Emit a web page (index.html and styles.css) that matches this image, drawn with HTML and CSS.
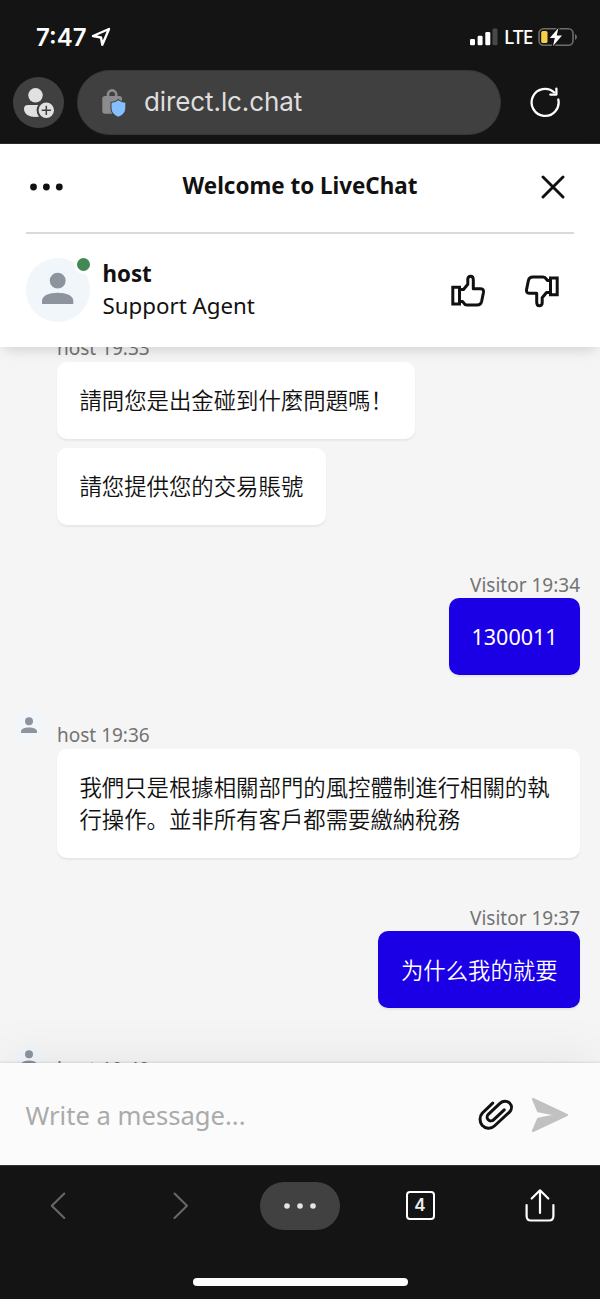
FILE: index.html
```html
<!DOCTYPE html>
<html lang="zh-Hans">
<head>
<meta charset="utf-8">
<title>Welcome to LiveChat</title>
<link rel="stylesheet" href="styles.css">
</head>
<body>
<div class="phone">
  <header class="browser-top">
    <div class="status">
      <div class="status-left">
        <span class="time">7:47</span>
        <svg class="location" width="20" height="20" viewBox="0 0 20 20"><path d="M2 9 L18 2 L11.3 17.8 L10 10.5 Z" fill="none" stroke="#fff" stroke-width="2.4" stroke-linejoin="round"/></svg>
      </div>
      <div class="status-right">
        <svg width="28" height="18" viewBox="0 0 28 18"><g fill="#fff"><rect x="0" y="11" width="5" height="6.3" rx="1.3"/><rect x="7.6" y="7.8" width="5" height="9.5" rx="1.3"/><rect x="15.3" y="4" width="5" height="13.3" rx="1.3"/></g><rect x="22.5" y="0.5" width="5" height="16.8" rx="1.3" fill="#484848"/></svg>
        <span class="network">LTE</span>
        <svg width="40" height="20" viewBox="0 0 40 20"><rect x="1" y="1.7" width="34" height="16.6" rx="4.6" fill="none" stroke="#6d6d6d" stroke-width="1.6"/><path d="M37 7 Q39 8 39 10 T37 13Z" fill="#6d6d6d"/><rect x="3.2" y="4" width="6.3" height="12" rx="1.6" fill="#f7ce46"/><path d="M20.4 1 L11.8 11 H16.8 L15 19 L24 8.6 H18.7Z" fill="#fff" stroke="#141414" stroke-width="2.4" paint-order="stroke" stroke-linejoin="round"/></svg>
      </div>
    </div>
    <div class="address-row">
      <div class="profile">
        <svg width="51" height="51" viewBox="0 0 51 51"><g fill="#e1e1e1"><circle cx="22.5" cy="18.3" r="7.2"/><path d="M15 28 H30 A4 4 0 0 1 34 32 C34 37 28.5 40 22.5 40 C16 40 11 37 11 32 A4 4 0 0 1 15 28Z"/><circle cx="33.3" cy="33.3" r="8.7" stroke="#404040" stroke-width="2"/></g><path d="M33.3 28.7V38M28.7 33.3H38" stroke="#404040" stroke-width="1.5"/></svg>
      </div>
      <div class="address">
        <svg width="26" height="30" viewBox="0 0 26 30"><path d="M7 9V6.5a4.1 4.1 0 0 1 8.2 0V9" fill="none" stroke="#8c8c8c" stroke-width="2.6"/><rect x="1.3" y="8" width="19.7" height="17.8" rx="2.7" fill="#8c8c8c"/><path d="M17.3 12.2 Q20 14.6 24.3 14.8 V20 Q24.3 26 17.3 28.8 Q10.5 26 10.5 20 V14.8 Q14.8 14.6 17.3 12.2Z" fill="#85bfff" stroke="#404040" stroke-width="2" paint-order="stroke"/></svg>
        <span class="url">direct.lc.chat</span>
      </div>
      <svg class="reload" width="32" height="32" viewBox="0 0 32 32"><path d="M29.3 13.5 A13.5 13.5 0 1 1 25.3 6.5" fill="none" stroke="#fff" stroke-width="2.3" stroke-linecap="round"/><path d="M27.4 2.6V8.6H21.3" fill="none" stroke="#fff" stroke-width="2.3" stroke-linecap="round" stroke-linejoin="round"/></svg>
    </div>
  </header>

  <section class="chat-head">
    <div class="title-row">
      <svg width="33" height="8" viewBox="0 0 33 8" fill="#111"><circle cx="3.5" cy="4" r="3.4"/><circle cx="16.4" cy="4" r="3.4"/><circle cx="29.3" cy="4" r="3.4"/></svg>
      <h1>Welcome to LiveChat</h1>
      <svg width="24" height="24" viewBox="0 0 24 24"><path d="M2 2L22 22M22 2L2 22" stroke="#111" stroke-width="2.9" stroke-linecap="round"/></svg>
    </div>
    <div class="agent-row">
      <div class="agent-avatar">
        <svg width="64" height="64" viewBox="0 0 64 64" fill="#8d949e"><circle cx="31.7" cy="22.7" r="7.9"/><path d="M16 46V43C16 37.5 23 34.7 31.7 34.7S47.3 37.5 47.3 43V46Z"/></svg>
        <span class="online"></span>
      </div>
      <div class="agent-text"><strong>host</strong><span>Support Agent</span></div>
      <div class="ratings">
        <svg width="36" height="36" viewBox="0 0 36 36"><g fill="none" stroke="#111" stroke-width="3" stroke-linejoin="round"><path d="M2.8 14.2H9.5V31H2.8Z" stroke-linejoin="miter"/><path d="M9.5 16.5H13.5L17.8 11.3V6.3Q17.8 3.2 20.7 3.2Q23.3 3.2 23.3 7V15.7H30.3Q33.8 15.7 33.5 19.2L31.6 28.5Q30.8 32 27.2 32H17Q14.8 32 13.8 30L12.5 28.5H9.5"/></g></svg>
        <svg width="36" height="36" viewBox="0 0 36 36"><g transform="rotate(180 18 18)" fill="none" stroke="#111" stroke-width="3" stroke-linejoin="round"><path d="M2.8 14.2H9.5V31H2.8Z" stroke-linejoin="miter"/><path d="M9.5 16.5H13.5L17.8 11.3V6.3Q17.8 3.2 20.7 3.2Q23.3 3.2 23.3 7V15.7H30.3Q33.8 15.7 33.5 19.2L31.6 28.5Q30.8 32 27.2 32H17Q14.8 32 13.8 30L12.5 28.5H9.5"/></g></svg>
      </div>
    </div>
  </section>

  <main class="messages">
    <div class="thread">
      <div class="group host">
        <div class="avatar-slot"></div>
        <div class="stack"><p class="label">host 19:33</p><p class="bubble">請問您是出金碰到什麼問題嗎！</p><p class="bubble">請您提供您的交易賬號</p></div>
      </div>
      <div class="group visitor">
        <div class="stack"><p class="label">Visitor 19:34</p><p class="bubble digits">1300011</p></div>
      </div>
      <div class="group host">
        <div class="avatar-slot"><svg class="mini-avatar" width="30" height="30" viewBox="0 0 64 64" fill="#8d949e"><circle cx="32" cy="22" r="8.5"/><path d="M15 47V43.5C15 38 23 35.2 32 35.2S49 38 49 43.5V47Z"/></svg></div>
        <div class="stack"><p class="label">host 19:36</p><p class="bubble">我們只是根據相關部門的風控體制進行相關的執行操作。並非所有客戶都需要繳納稅務</p></div>
      </div>
      <div class="group visitor">
        <div class="stack"><p class="label">Visitor 19:37</p><p class="bubble">为什么我的就要</p></div>
      </div>
      <div class="group host">
        <div class="avatar-slot"><svg class="mini-avatar" width="30" height="30" viewBox="0 0 64 64" fill="#8d949e"><circle cx="32" cy="22" r="8.5"/><path d="M15 47V43.5C15 38 23 35.2 32 35.2S49 38 49 43.5V47Z"/></svg></div>
        <div class="stack"><p class="label">host 19:40</p></div>
      </div>
    </div>
  </main>

  <section class="composer">
    <span class="placeholder">Write a message...</span>
    <svg width="36" height="32" viewBox="0 0 36 32"><path d="M14.7 4.1 L4.2 14.2 C1.3 17.5 1.4 23 4.1 26.2 C7.3 29.8 12.9 30.2 16.4 27 L31.4 13.1 C34.1 10.4 34.1 6.5 31.6 4 C29 1.5 24.8 1.5 22.2 4.1 L10.3 15.4 C8.7 17 8.8 19.4 10.2 20.8 C11.8 22.4 14.3 22.1 15.8 20.7 L26.2 10.8" fill="none" stroke="#111" stroke-width="3" stroke-linecap="round"/></svg>
    <svg class="send" width="38" height="36" viewBox="0 0 38 36"><path d="M2 2L36 18L2 34L7.2 21.8L26 18L7.2 14.2Z" fill="#c1c1c1" stroke="#c1c1c1" stroke-width="2.2" stroke-linejoin="round"/></svg>
  </section>

  <footer class="browser-bottom">
    <nav class="toolbar">
      <svg width="30" height="36" viewBox="0 0 30 36"><path d="M19.3 5.5L6.8 17.7L19.3 30" fill="none" stroke="#676767" stroke-width="2.1" stroke-linecap="round" stroke-linejoin="round"/></svg>
      <svg width="30" height="36" viewBox="0 0 30 36"><path d="M9.5 5.5L22 17.7L9.5 30" fill="none" stroke="#676767" stroke-width="2.1" stroke-linecap="round" stroke-linejoin="round"/></svg>
      <div class="more"><svg width="34" height="8" viewBox="0 0 34 8" fill="#e5e5e5"><circle cx="4" cy="4" r="2.8"/><circle cx="17" cy="4" r="2.8"/><circle cx="30" cy="4" r="2.8"/></svg></div>
      <span class="tabs">4</span>
      <svg width="32" height="36" viewBox="0 0 32 36"><path d="M2.6 17V28Q2.6 32.5 7 32.5H25Q29.4 32.5 29.4 28V17M16 25V2.3M7.7 10.5L16 2.3L24.3 10.5" fill="none" stroke="#fff" stroke-width="2.2" stroke-linecap="round" stroke-linejoin="round"/></svg>
    </nav>
    <div class="home-bar"></div>
  </footer>
</div>
</body>
</html>
```
FILE: styles.css
```css
* { box-sizing: border-box; }
body { margin: 0; font-family: "Noto Sans", "Noto Sans CJK SC", sans-serif; color: #111; }
h1, p { margin: 0; }
svg { display: block; flex: none; }

.phone { width: 600px; height: 1299px; display: flex; flex-direction: column; overflow: hidden; background: #f5f5f5; }

.browser-top { flex: none; height: 144px; background: #141414; color: #fff; font-family: Inter, sans-serif; border-bottom: 1px solid #2b2b2b; }
.status { height: 70px; padding: 4px 22px 0 36px; display: flex; justify-content: space-between; align-items: center; }
.status-left, .status-right { display: flex; align-items: center; }
.status-left { gap: 5px; }
.time { font-size: 24px; font-weight: 600; letter-spacing: 0; }
.status-right { gap: 6px; }
.network { font-family: "Noto Sans", sans-serif; font-size: 19px; font-weight: 500; width: 28px; letter-spacing: -0.9px; }
.address-row { display: flex; align-items: center; height: 65px; padding: 0 38px 0 13px; }
.profile { width: 51px; height: 51px; border-radius: 50%; background: #404040; margin-right: 13px; }
.address { width: 424px; height: 65px; border-radius: 33px; background: #404040; border: 1px solid #373737; display: flex; align-items: center; gap: 17px; padding-left: 23px; margin-right: 28px; }
.reload { margin-bottom: 1px; }
.url { font-size: 26px; line-height: 32px; color: #dedede; letter-spacing: -0.1px; margin-bottom: 2px; }

.chat-head { flex: none; position: relative; z-index: 1; height: 203px; padding: 0 26px; background: #fff; box-shadow: 0 5px 14px -4px rgba(0, 0, 0, 0.19); }
.title-row { height: 90px; padding: 0 9px 2px 4px; display: flex; justify-content: space-between; align-items: center; border-bottom: 2px solid #dadada; }
h1 { font-size: 22.4px; line-height: 32px; font-weight: 700; margin: 0 4px 3px 0; }
.agent-row { display: flex; align-items: center; height: 113px; padding: 0 14px 2px 0; }
.agent-avatar { position: relative; width: 64px; height: 64px; border-radius: 50%; background: #f1f6fa; }
.online { position: absolute; right: -3px; top: -3px; width: 19px; height: 19px; border-radius: 50%; border: 3px solid #fff; background: #428854; }
.agent-text { display: flex; flex-direction: column; margin-left: 12.5px; font-size: 22.3px; line-height: 32px; }
.ratings { display: flex; gap: 38px; margin-left: auto; padding-top: 2px; }

.messages { flex: none; height: 716px; overflow: hidden; }
.thread { margin-top: -13.6px; padding: 0 20px; display: flex; flex-direction: column; gap: 45px; }
.group { display: flex; }
.avatar-slot { width: 37px; flex: none; }
.mini-avatar { margin: -9px 0 0 -6px; background: #f1f6fa; border-radius: 50%; }
.stack { flex: 1; display: flex; flex-direction: column; align-items: flex-start; }
.visitor .stack { align-items: flex-end; }
.label { font-size: 19px; line-height: 30px; height: 28.7px; color: #737373; }
.group:last-child .label { line-height: 32px; }
.bubble { padding: 21.4px 22.4px 23.4px; font-size: 22.4px; line-height: 32px; min-height: 76.8px; border-radius: 10px; background: #fff; box-shadow: 0 2px 2px rgba(0, 0, 0, 0.06); font-family: "Noto Sans CJK SC", sans-serif; font-weight: 350; }
.bubble + .bubble { margin-top: 9px; }
.visitor .bubble { background: #1b00e6; color: #fff; }
.visitor .digits { padding-top: 22.4px; padding-bottom: 22.4px; font-family: "Noto Sans", sans-serif; font-size: 21.5px; font-weight: 400; }

.composer { flex: none; position: relative; z-index: 1; height: 102px; padding: 2px 31px 0 25.5px; display: flex; align-items: center; background: #fbfbfb; box-shadow: 0 -1px 2px rgba(0, 0, 0, 0.1), 0 -8px 50px rgba(0, 0, 30, 0.06); }
.placeholder { flex: 1; font-size: 25.6px; color: #aaa; }
.send { margin-left: 17px; }

.browser-bottom { flex: none; position: relative; z-index: 2; height: 134px; background: #141414; border-top: 1px solid #333; }
.toolbar { display: grid; grid-template-columns: repeat(5, 120px); justify-items: center; align-items: center; height: 79px; }
.more { width: 80px; height: 48px; border-radius: 24px; background: #414141; display: flex; align-items: center; justify-content: center; }
.tabs { width: 29px; height: 29px; border: 2px solid #fff; border-radius: 4px; color: #eee; font: 600 17px/25px Inter, sans-serif; text-align: center; }
.home-bar { width: 215px; height: 8px; border-radius: 4px; background: #fff; margin: 33px auto 0; }
```
